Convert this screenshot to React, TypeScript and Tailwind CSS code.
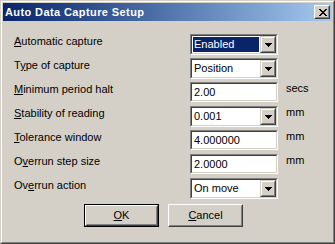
const FONT = "font-['Liberation_Sans',Arial,sans-serif]";

type Row = {
  label: string;
  key: number;
  kind: "combo" | "edit";
  value: string;
  unit?: string;
  selected?: boolean;
};

const rows: Row[] = [
  { label: "Automatic capture", key: 0, kind: "combo", value: "Enabled", selected: true },
  { label: "Type of capture", key: 1, kind: "combo", value: "Position" },
  { label: "Minimum period halt", key: 0, kind: "edit", value: "2.00", unit: "secs" },
  { label: "Stability of reading", key: 0, kind: "combo", value: "0.001", unit: "mm" },
  { label: "Tolerance window", key: 0, kind: "edit", value: "4.000000", unit: "mm" },
  { label: "Overrun step size", key: 1, kind: "edit", value: "2.0000", unit: "mm" },
  { label: "Overrun action", key: 2, kind: "combo", value: "On move" },
];

function Mnemonic({ text, at }: { text: string; at: number }) {
  return (
    <>
      {text.slice(0, at)}
      <span className="underline underline-offset-[1px]">{text[at]}</span>
      {text.slice(at + 1)}
    </>
  );
}

function Sunken({ children, h }: { children: React.ReactNode; h: string }) {
  return (
    <div
      className={`w-[88px] ${h} border border-t-[#808080] border-l-[#808080] border-r-white border-b-white`}
    >
      <div className="h-full border border-t-[#404040] border-l-[#404040] border-r-[#d4d0c8] border-b-[#d4d0c8] bg-white flex">
        {children}
      </div>
    </div>
  );
}

function Raised({ children, className = "" }: { children: React.ReactNode; className?: string }) {
  return (
    <div
      className={`border border-t-[#d4d0c8] border-l-[#d4d0c8] border-r-[#404040] border-b-[#404040] bg-[#d4d0c8] ${className}`}
    >
      <div className="h-full border border-t-white border-l-white border-r-[#808080] border-b-[#808080] flex items-center justify-center">
        {children}
      </div>
    </div>
  );
}

function PushButton({ children }: { children: React.ReactNode }) {
  return (
    <div className="w-[75px] h-[23px] border border-t-white border-l-white border-r-[#404040] border-b-[#404040] bg-[#d4d0c8]">
      <div className="h-full border border-t-[#d4d0c8] border-l-[#d4d0c8] border-r-[#808080] border-b-[#808080] flex items-center justify-center">
        {children}
      </div>
    </div>
  );
}

function DownArrow() {
  return (
    <svg width="7" height="4" viewBox="0 0 7 4" shapeRendering="crispEdges">
      <rect x="0" y="0" width="7" height="1" fill="#000" />
      <rect x="1" y="1" width="5" height="1" fill="#000" />
      <rect x="2" y="2" width="3" height="1" fill="#000" />
      <rect x="3" y="3" width="1" height="1" fill="#000" />
    </svg>
  );
}

function CloseGlyph() {
  const px = [
    "##....##",
    ".##..##.",
    "..####..",
    "...##...",
    "..####..",
    ".##..##.",
    "##....##",
  ];
  return (
    <svg width="8" height="7" viewBox="0 0 8 7" shapeRendering="crispEdges">
      {px.flatMap((line, y) =>
        line.split("").map((c, x) =>
          c === "#" ? <rect key={`${x}-${y}`} x={x} y={y} width="1" height="1" fill="#000" /> : null
        )
      )}
    </svg>
  );
}

function Combo({ value, selected }: { value: string; selected?: boolean }) {
  return (
    <Sunken h="h-[21px]">
      <div className="flex-1 p-px">
        <div
          className={`h-full pl-[1px] leading-[15px] ${
            selected ? "bg-[#0a246a] text-white" : "text-black"
          }`}
        >
          {value}
        </div>
      </div>
      <Raised className="w-[16px] h-full">
        <DownArrow />
      </Raised>
    </Sunken>
  );
}

function Edit({ value }: { value: string }) {
  return (
    <Sunken h="h-[20px]">
      <div className="pl-[2px] leading-[16px] text-black">{value}</div>
    </Sunken>
  );
}

export default function App() {
  return (
    <div
      className={`w-[335px] h-[244px] ${FONT} text-[11px] text-black border border-t-[#d4d0c8] border-l-[#d4d0c8] border-r-[#404040] border-b-[#404040] bg-[#d4d0c8]`}
    >
      <div className="h-full border border-t-white border-l-white border-r-[#808080] border-b-[#808080] p-px flex flex-col">
        <div className="h-[18px] bg-linear-to-r from-[#0a246a] to-[#a6caf0] flex items-center pl-[2px] pr-[2px]">
          <span className="text-white font-bold text-[11px] tracking-[0.4px] leading-[18px]">
            Auto Data Capture Setup
          </span>
          <div className="ml-auto w-[16px] h-[14px] border border-t-white border-l-white border-r-[#404040] border-b-[#404040] bg-[#d4d0c8]">
            <div className="h-full border border-t-[#d4d0c8] border-l-[#d4d0c8] border-r-[#808080] border-b-[#808080] flex items-start pl-[3px] pt-[2px]">
              <CloseGlyph />
            </div>
          </div>
        </div>

        <div className="flex-1 pt-[13px] pl-[11px]">
          {rows.map((r) => (
            <div key={r.label} className="flex h-[21px] mb-[3px] leading-[13px]">
              <div className="w-[176px] pt-px">
                <Mnemonic text={r.label} at={r.key} />
              </div>
              {r.kind === "combo" ? (
                <Combo value={r.value} selected={r.selected} />
              ) : (
                <Edit value={r.value} />
              )}
              {r.unit && <div className="ml-[8px]">{r.unit}</div>}
            </div>
          ))}

          <div className="flex gap-[9px] mt-[5px] pl-[70px]">
            <div className="w-[75px] h-[23px] border border-black">
              <div className="h-full border border-t-white border-l-white border-r-[#404040] border-b-[#404040]">
                <div className="h-full border border-t-[#d4d0c8] border-l-[#d4d0c8] border-r-[#808080] border-b-[#808080] flex items-center justify-center">
                  <Mnemonic text="OK" at={0} />
                </div>
              </div>
            </div>
            <PushButton>
              <Mnemonic text="Cancel" at={0} />
            </PushButton>
          </div>
        </div>
      </div>
    </div>
  );
}
